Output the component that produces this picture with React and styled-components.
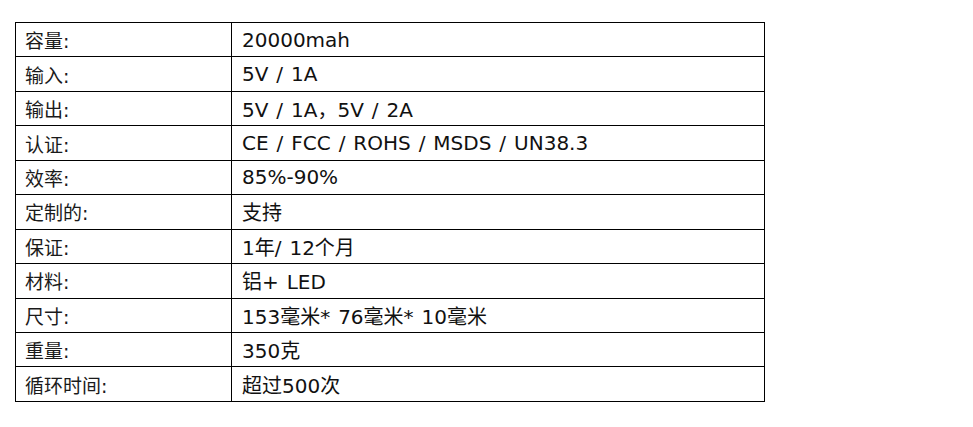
import React from 'react';
import styled, { createGlobalStyle } from 'styled-components';

const GlobalStyle = createGlobalStyle`
body {
    margin: 0;
    background: #ffffff;
}
`;

const Page = styled.div`
padding: 22px 15px;
font-family: "DejaVu Sans", Verdana, "Noto Sans CJK SC", sans-serif;
`;

const SpecTable = styled.table`
width: 750px;
border-collapse: collapse;
table-layout: fixed;
`;

const Row = styled.tr`
height: 34.45px;
`;

const LabelCell = styled.td`
width: 197px;
border: 1px solid #000;
padding: 0 9px;
font-size: 19px;
color: #1a1a1a;
vertical-align: middle;
white-space: nowrap;
`;

const ValueCell = styled.td`
border: 1px solid #000;
padding: 0 10px;
font-size: 20px;
color: #111;
word-spacing: 1.6px;
vertical-align: middle;
white-space: nowrap;
`;

const specs = [
    ['容量:', '20000mah'],
    ['输入:', '5V / 1A'],
    ['输出:', '5V / 1A，5V / 2A'],
    ['认证:', 'CE / FCC / ROHS / MSDS / UN38.3'],
    ['效率:', '85%-90%'],
    ['定制的:', '支持'],
    ['保证:', '1年/ 12个月'],
    ['材料:', '铝+ LED'],
    ['尺寸:', '153毫米* 76毫米* 10毫米'],
    ['重量:', '350克'],
    ['循环时间:', '超过500次']
];

export default function App() {
    return (
        <Page>
            <GlobalStyle />
            <SpecTable>
                <tbody>
                    {specs.map(([label, value], i) => (
                        <Row key={i}>
                            <LabelCell>{label}</LabelCell>
                            <ValueCell>{value}</ValueCell>
                        </Row>
                    ))}
                </tbody>
            </SpecTable>
        </Page>
    );
}
